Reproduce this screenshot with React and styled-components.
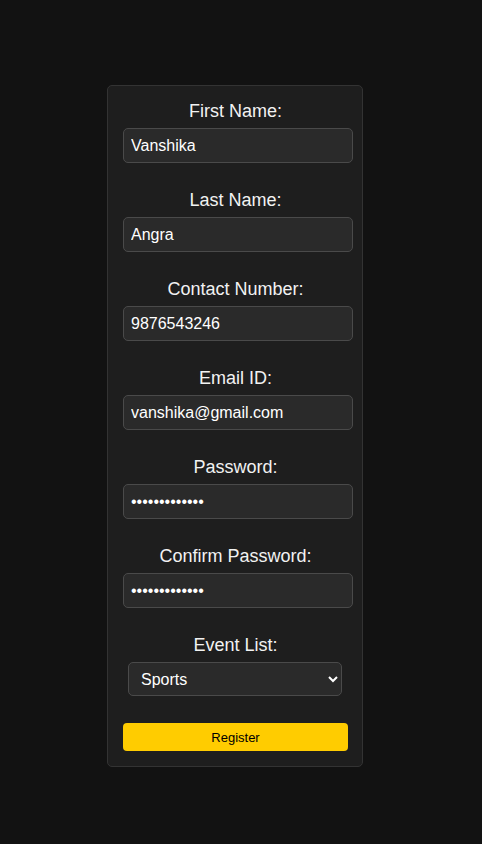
import React, { useState } from "react";
import styled, { createGlobalStyle } from "styled-components";

const GlobalStyle = createGlobalStyle`
  html, body {
    margin: 0;
    padding: 0;
    background: #121212;
    font-family: "Liberation Sans", Arial, sans-serif;
  }
`;

const Page = styled.div`
  min-height: 844px;
  box-sizing: border-box;
  padding: 85px 0 0 107px;
`;

const Card = styled.form`
  width: 256px;
  box-sizing: border-box;
  padding: 15px 14px 15px 15px;
  background: #1e1e1e;
  border: 1px solid #333;
  border-radius: 5px;
  display: flex;
  flex-direction: column;
`;

const Group = styled.div`
  display: flex;
  flex-direction: column;
  margin-bottom: 27px;
`;

const Label = styled.label`
  color: #f2f2f2;
  font-size: 18px;
  line-height: 21px;
  text-align: center;
  margin-bottom: 6px;
`;

const Input = styled.input`
  width: 230px;
  height: 35px;
  box-sizing: border-box;
  padding: 0 7px;
  background: #2a2a2a;
  border: 1px solid #4a4a4a;
  border-radius: 5px;
  color: #fff;
  font-family: inherit;
  font-size: 16px;
  outline: none;
`;

const Select = styled.select`
  width: 214px;
  height: 34px;
  margin-left: 5px;
  box-sizing: border-box;
  padding: 0 6px 0 8px;
  background: #2a2a2a;
  border: 1px solid #4a4a4a;
  border-radius: 5px;
  color: #fff;
  color-scheme: dark;
  font-family: inherit;
  font-size: 16px;
  outline: none;
`;

const Button = styled.button`
  width: 100%;
  height: 28px;
  background: #ffcc00;
  border: none;
  border-radius: 4px;
  color: #000;
  font-family: inherit;
  font-size: 13px;
  cursor: pointer;
`;

const fields = [
  { id: "first", label: "First Name:", value: "Vanshika" },
  { id: "last", label: "Last Name:", value: "Angra" },
  { id: "contact", label: "Contact Number:", value: "9876543246" },
  { id: "email", label: "Email ID:", value: "vanshika@gmail.com" },
  { id: "password", label: "Password:", value: "vanshika12345", type: "password" },
  { id: "confirm", label: "Confirm Password:", value: "vanshika12345", type: "password" },
];

const App = () => {
  const [form, setForm] = useState(
    Object.fromEntries(fields.map((f) => [f.id, f.value]))
  );
  const [event, setEvent] = useState("Sports");

  return (
    <Page>
      <GlobalStyle />
      <Card onSubmit={(e) => e.preventDefault()}>
        {fields.map((f) => (
          <Group key={f.id}>
            <Label htmlFor={f.id}>{f.label}</Label>
            <Input
              id={f.id}
              type={f.type || "text"}
              value={form[f.id]}
              onChange={(e) => setForm({ ...form, [f.id]: e.target.value })}
            />
          </Group>
        ))}
        <Group>
          <Label htmlFor="event">Event List:</Label>
          <Select id="event" value={event} onChange={(e) => setEvent(e.target.value)}>
            <option>Sports</option>
            <option>Music</option>
            <option>Dance</option>
            <option>Drama</option>
          </Select>
        </Group>
        <Button type="submit">Register</Button>
      </Card>
    </Page>
  );
};

export default App;
